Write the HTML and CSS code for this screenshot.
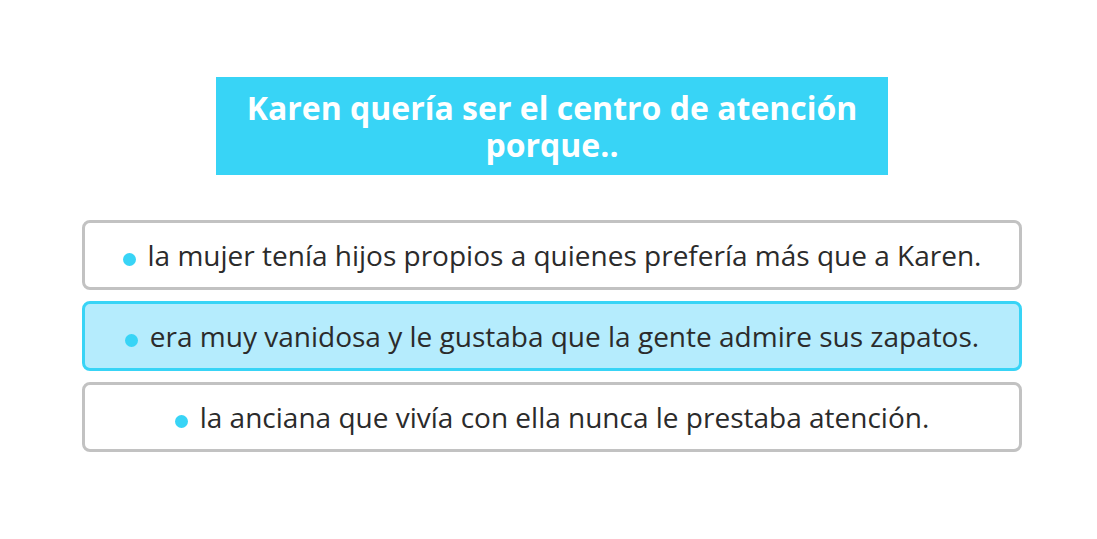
FILE: index.html
```html
<!DOCTYPE html>
<html lang="es">
<head>
<meta charset="utf-8">
<link rel="stylesheet" href="styles.css">
</head>
<body>
<main class="quiz">
  <h1 class="question">Karen quería ser el centro de atención porque..</h1>
  <ul class="options">
    <li class="option"><span class="dot"></span>la mujer tenía hijos propios a quienes prefería más que a Karen.</li>
    <li class="option selected"><span class="dot"></span>era muy vanidosa y le gustaba que la gente admire sus zapatos.</li>
    <li class="option"><span class="dot"></span>la anciana que vivía con ella nunca le prestaba atención.</li>
  </ul>
</main>
</body>
</html>
```
FILE: styles.css
```css
html, body { margin: 0; padding: 0; background: #fff; }
body { font-family: "Open Sans", "Noto Sans", sans-serif; }
.quiz {
  width: 940px;
  margin-left: 82px;
  padding-top: 77px;
  display: flex;
  flex-direction: column;
  align-items: center;
}
.question {
  margin: 0;
  width: 672px;
  box-sizing: border-box;
  height: 98px;
  padding: 12px 20px 0;
  background: #38d4f6;
  color: #fff;
  font-size: 32px;
  font-weight: 700;
  line-height: 37px;
  text-align: center;
}
.options {
  list-style: none;
  margin: 45px 0 0;
  padding: 0;
  width: 100%;
  display: flex;
  flex-direction: column;
  gap: 11px;
}
.option {
  box-sizing: border-box;
  height: 70px;
  border: 3px solid #c2c2c2;
  border-radius: 8px;
  display: flex;
  align-items: center;
  justify-content: center;
  font-size: 28px;
  color: #2b2b2b;
  background: #fff;
  white-space: nowrap;
}
.option.selected {
  background: #b5ecfd;
  border-color: #38d4f6;
}
.dot {
  width: 13px;
  height: 13px;
  border-radius: 50%;
  background: #38d4f6;
  margin: 8px 12px 0 0;
  flex: none;
}
```
